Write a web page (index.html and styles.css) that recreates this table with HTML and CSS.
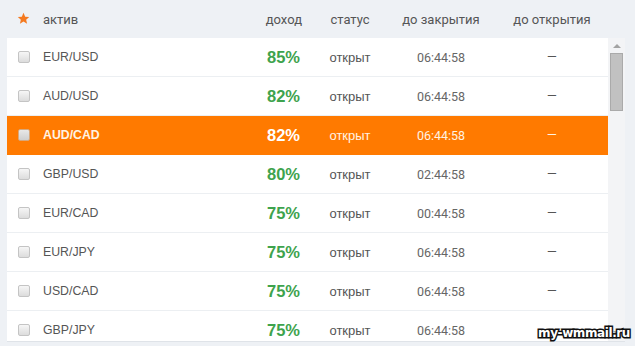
FILE: index.html
```html
<!DOCTYPE html>
<html lang="ru">
<head>
<meta charset="utf-8">
<link rel="stylesheet" href="styles.css">
</head>
<body>
<div class="page">
  <div class="head grid">
    <div class="c-check"><svg class="star" width="13" height="13" viewBox="0 0 24 24"><path d="M12 1.5l3.1 7.1 7.4.6-5.6 4.9 1.7 7.4L12 17.6l-6.6 3.9 1.7-7.4-5.6-4.9 7.4-.6z" fill="#f47a20"/></svg></div>
    <div class="c-name">актив</div>
    <div class="c-pct h-pct">доход</div>
    <div class="c-status">статус</div>
    <div class="c-time">до закрытия</div>
    <div class="c-gap"></div>
    <div class="c-open">до открытия</div>
  </div>
  <div class="body">
    <div class="list">
      <div class="row grid"><div class="c-check"><span class="box"></span></div><div class="c-name">EUR/USD</div><div class="c-pct pct">85%</div><div class="c-status">открыт</div><div class="c-time time">06:44:58</div><div class="c-gap"></div><div class="c-open dash">–</div></div>
      <div class="row grid"><div class="c-check"><span class="box"></span></div><div class="c-name">AUD/USD</div><div class="c-pct pct">82%</div><div class="c-status">открыт</div><div class="c-time time">06:44:58</div><div class="c-gap"></div><div class="c-open dash">–</div></div>
      <div class="row grid active"><div class="c-check"><span class="box"></span></div><div class="c-name">AUD/CAD</div><div class="c-pct pct">82%</div><div class="c-status">открыт</div><div class="c-time time">06:44:58</div><div class="c-gap"></div><div class="c-open dash">–</div></div>
      <div class="row grid"><div class="c-check"><span class="box"></span></div><div class="c-name">GBP/USD</div><div class="c-pct pct">80%</div><div class="c-status">открыт</div><div class="c-time time">02:44:58</div><div class="c-gap"></div><div class="c-open dash">–</div></div>
      <div class="row grid"><div class="c-check"><span class="box"></span></div><div class="c-name">EUR/CAD</div><div class="c-pct pct">75%</div><div class="c-status">открыт</div><div class="c-time time">00:44:58</div><div class="c-gap"></div><div class="c-open dash">–</div></div>
      <div class="row grid"><div class="c-check"><span class="box"></span></div><div class="c-name">EUR/JPY</div><div class="c-pct pct">75%</div><div class="c-status">открыт</div><div class="c-time time">06:44:58</div><div class="c-gap"></div><div class="c-open dash">–</div></div>
      <div class="row grid"><div class="c-check"><span class="box"></span></div><div class="c-name">USD/CAD</div><div class="c-pct pct">75%</div><div class="c-status">открыт</div><div class="c-time time">06:44:58</div><div class="c-gap"></div><div class="c-open dash">–</div></div>
      <div class="row grid"><div class="c-check"><span class="box"></span></div><div class="c-name">GBP/JPY</div><div class="c-pct pct">75%</div><div class="c-status">открыт</div><div class="c-time time">06:44:58</div><div class="c-gap"></div><div class="c-open dash">–</div></div>
    </div>
    <div class="scroll">
      <span class="arrow-up"></span>
      <span class="thumb"></span>
      <span class="arrow-down"></span>
    </div>
  </div>
  <div class="watermark">my-wmmail.ru</div>
</div>
</body>
</html>
```
FILE: styles.css
```css
html, body {
  margin: 0;
  padding: 0;
}
body {
  background: #eef1f5;
  width: 635px;
  height: 346px;
  overflow: hidden;
  font-family: "Liberation Sans", Arial, sans-serif;
  color: #555;
}
.page {
  position: relative;
  height: 346px;
  padding-left: 7px;
}
.grid {
  display: grid;
  grid-template-columns: 36px 207px 50px 100px 82px 30px 80px;
  align-items: center;
}
.head {
  height: 38px;
  font-family: Roboto, "Liberation Sans", sans-serif;
  font-size: 13px;
  color: #555;
}
.star {
  display: block;
  margin-left: 10px;
  margin-top: -2px;
}
.h-pct {
  text-align: right;
  margin-right: -2px;
}
.c-pct { text-align: right; }
.c-status, .c-time, .c-open { text-align: center; }
.body {
  display: flex;
  align-items: flex-start;
  height: 303px;
  border-bottom: 1px solid #dfe3e8;
  width: 618px;
}
.list {
  width: 601px;
  height: 303px;
  overflow: hidden;
  background: #fff;
}
.row {
  height: 38px;
  border-bottom: 1px solid #eceff2;
  font-size: 12.3px;
  color: #555;
}
.c-check {
  display: flex;
  align-items: center;
}
.box {
  display: block;
  width: 10px;
  height: 10px;
  margin-left: 11px;
  border: 1px solid #c4c4c4;
  border-radius: 2px;
  background: linear-gradient(#f6f6f6, #dcdcdc);
}
.pct {
  font-weight: bold;
  font-size: 16.5px;
  color: #3ea34d;
}
.c-status { font-size: 13px; }
.time {
  font-family: Roboto, "Liberation Sans", sans-serif;
  font-size: 12.5px;
  color: #666;
}
.dash {
  color: #555;
  font-size: 15px;
  padding-bottom: 5px;
}
.row.active {
  background: #ff7a00;
  color: #fff3e3;
  border-bottom-color: #ff7a00;
}
.row.active .c-name { font-weight: bold; }
.row.active .pct { color: #fff; }
.row.active .time { color: #fff3e3; }
.row.active .dash { color: #fff3e3; }
.row.active .box {
  border-color: #d9a77a;
  background: linear-gradient(#e8e8e8, #cfcfcf);
}
.scroll {
  width: 17px;
  height: 303px;
  background: #f3f4f6;
  display: flex;
  flex-direction: column;
  align-items: center;
}
.arrow-up, .arrow-down {
  display: block;
  width: 0;
  height: 0;
  border-left: 4px solid transparent;
  border-right: 4px solid transparent;
}
.arrow-up {
  margin-top: 6px;
  border-bottom: 4px solid #a3a3a3;
}
.arrow-down {
  margin-top: auto;
  margin-bottom: 6px;
  border-top: 4px solid #a3a3a3;
}
.thumb {
  display: block;
  margin-top: 5px;
  width: 11px;
  height: 56px;
  background: #c1c1c1;
  border: 1px solid #aaa;
}
.watermark {
  position: absolute;
  right: 5px;
  bottom: 6px;
  font-family: "DejaVu Sans", sans-serif;
  font-weight: bold;
  font-size: 12px;
  letter-spacing: -0.4px;
  color: #fff;
  -webkit-text-stroke: 3px #111;
  paint-order: stroke fill;
}
```
